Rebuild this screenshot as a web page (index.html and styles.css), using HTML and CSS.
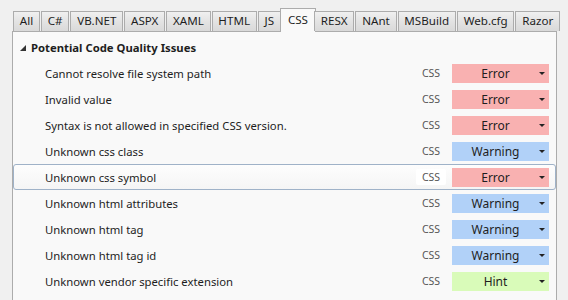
FILE: index.html
```html
<!DOCTYPE html>
<html lang="en">
<head>
    <meta charset="UTF-8">
    <title>Inspection Severity</title>
    <link rel="stylesheet" href="styles.css">
</head>
<body>
    <div class="tabs">
        <div class="tab">All</div>
        <div class="tab">C#</div>
        <div class="tab">VB.NET</div>
        <div class="tab">ASPX</div>
        <div class="tab">XAML</div>
        <div class="tab">HTML</div>
        <div class="tab">JS</div>
        <div class="tab active">CSS</div>
        <div class="tab">RESX</div>
        <div class="tab">NAnt</div>
        <div class="tab">MSBuild</div>
        <div class="tab">Web.cfg</div>
        <div class="tab">Razor</div>
    </div>

    <div class="panel">
        <div class="group-header">
            <span class="expander"></span>
            Potential Code Quality Issues
        </div>

        <div class="row">
            <div class="row-label">Cannot resolve file system path</div>
            <div class="row-lang">CSS</div>
            <div class="severity error">Error</div>
        </div>
        <div class="row">
            <div class="row-label">Invalid value</div>
            <div class="row-lang">CSS</div>
            <div class="severity error">Error</div>
        </div>
        <div class="row">
            <div class="row-label">Syntax is not allowed in specified CSS version.</div>
            <div class="row-lang">CSS</div>
            <div class="severity error">Error</div>
        </div>
        <div class="row">
            <div class="row-label">Unknown css class</div>
            <div class="row-lang">CSS</div>
            <div class="severity warning">Warning</div>
        </div>
        <div class="row selected">
            <div class="row-label">Unknown css symbol</div>
            <div class="row-lang">CSS</div>
            <div class="severity error">Error</div>
        </div>
        <div class="row">
            <div class="row-label">Unknown html attributes</div>
            <div class="row-lang">CSS</div>
            <div class="severity warning">Warning</div>
        </div>
        <div class="row">
            <div class="row-label">Unknown html tag</div>
            <div class="row-lang">CSS</div>
            <div class="severity warning">Warning</div>
        </div>
        <div class="row">
            <div class="row-label">Unknown html tag id</div>
            <div class="row-lang">CSS</div>
            <div class="severity warning">Warning</div>
        </div>
        <div class="row">
            <div class="row-label">Unknown vendor specific extension</div>
            <div class="row-lang">CSS</div>
            <div class="severity hint">Hint</div>
        </div>
    </div>
</body>
</html>
```

FILE: styles.css
```css
:root {
    --border: #acacac;
    --panel-bg: #f9f9f9;
    --page-bg: #f0f0f0;
    --text: #1e1e1e;
    --error: #f9b1b1;
    --warning: #b1d1f8;
    --hint: #d9fbb9;
}

* {
    margin: 0;
    padding: 0;
    box-sizing: border-box;
}

body {
    font-family: 'Noto Sans', sans-serif;
    font-size: 11.3px;
    color: var(--text);
    background: var(--page-bg);
    height: 300px;
    overflow: hidden;
}

.tabs {
    display: flex;
    align-items: flex-end;
    padding: 8px 0 0 13px;
    position: relative;
    z-index: 1;
}

.tab {
    height: 20px;
    line-height: 18px;
    padding: 0 5.8px;
    border: 1px solid var(--border);
    border-bottom: none;
    background: linear-gradient(#f0f0f0, #e3e3e3 50%, #d9d9d9);
    margin-right: 1px;
    font-size: 11.6px;
}

.tab.active {
    height: 24px;
    line-height: 21px;
    padding: 0 7px;
    background: var(--panel-bg);
    margin: 0 0 -1px -2px;
}

.tab.active + .tab {
    margin-left: -2px;
}

.panel {
    margin: 0 11px 0 12px;
    border: 1px solid var(--border);
    background: var(--panel-bg);
    height: 280px;
    padding-top: 2px;
}

.group-header {
    height: 26px;
    display: flex;
    align-items: center;
    gap: 5px;
    padding-left: 7px;
    font-weight: 700;
}

.expander {
    width: 0;
    height: 0;
    border-left: 6px solid transparent;
    border-bottom: 6px solid #333;
    margin-top: 2px;
}

.row {
    height: 26px;
    display: flex;
    align-items: center;
    padding: 0 6px 0 31px;
    border: 1px solid transparent;
    border-radius: 3px;
}

.row.selected {
    border-color: #9fb2c8;
    background: linear-gradient(#fdfdfd, #f5f5f5);
}

.row-label {
    flex: 1;
}

.row-lang {
    font-size: 10.5px;
    color: #555;
    width: 30px;
    padding: 1px 0;
    margin-right: 6px;
    text-align: center;
    border-radius: 2px;
}

.row.selected .row-lang {
    background: #fff;
}

.severity {
    width: 97px;
    height: 19px;
    line-height: 19px;
    font-size: 12px;
    text-align: center;
    padding-right: 10px;
    position: relative;
}

.severity::after {
    content: "";
    position: absolute;
    right: 4px;
    top: 8px;
    border-left: 3px solid transparent;
    border-right: 3px solid transparent;
    border-top: 3px solid #222;
}

.severity.error {
    background: var(--error);
}

.severity.warning {
    background: var(--warning);
}

.severity.hint {
    background: var(--hint);
}
```
